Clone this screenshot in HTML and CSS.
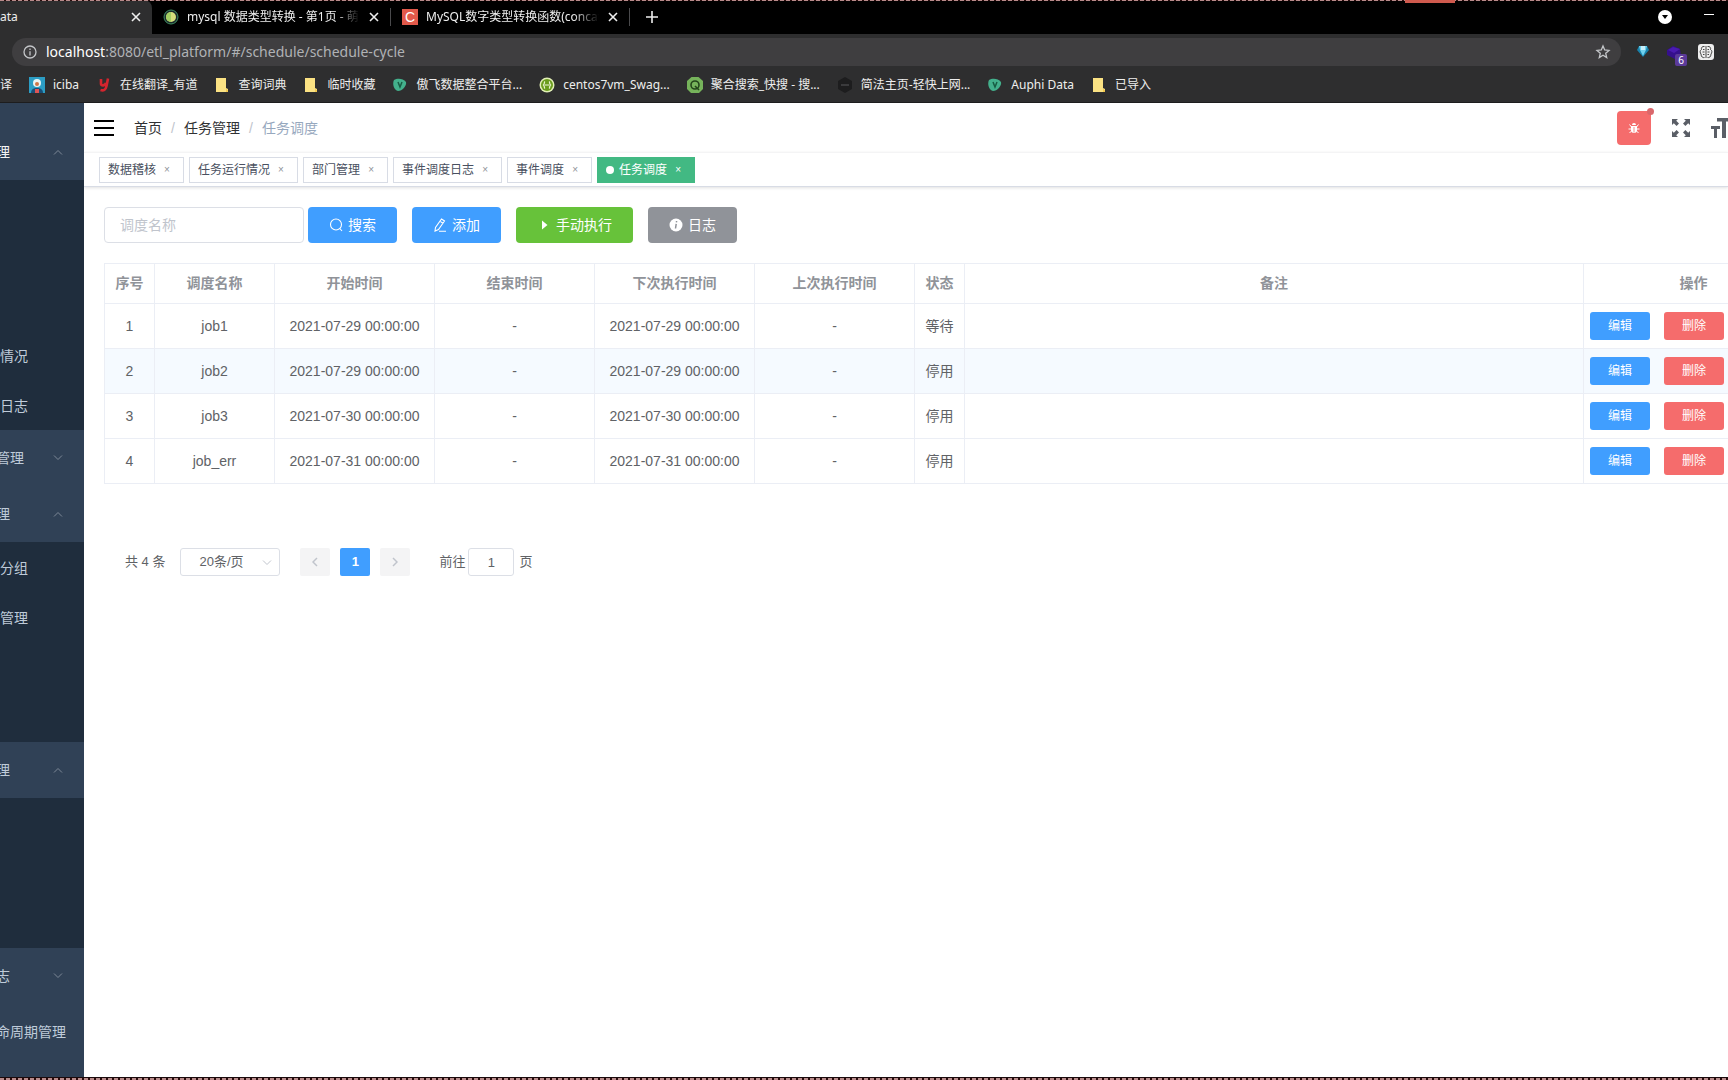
FILE: index.html
```html
<!DOCTYPE html>
<html lang="zh-CN">
<head>
<meta charset="utf-8">
<title>Auphi Data</title>
<link rel="stylesheet" href="styles.css">
</head>
<body>
<div class="screen">
<header class="browser">
  <div class="tabstrip">
    <div class="tab tab-active"><span class="tab-title">ata</span><button class="tab-close" aria-label="关闭"><svg width="10" height="10" viewBox="0 0 10 10"><path d="M1 1l8 8M9 1l-8 8"/></svg></button></div>
    <div class="tab"><svg width="16" height="16" viewBox="0 0 16 16"><circle cx="8" cy="8" r="7" fill="#1b2a2c" stroke="#3f8d63"/><circle cx="8" cy="8" r="5" fill="#d6df7c"/><path d="M8 3a5 5 0 0 0 0 10z" fill="#a3cf62"/></svg><span class="tab-title fade">mysql 数据类型转换 - 第1页 - 萌</span><button class="tab-close" aria-label="关闭"><svg width="10" height="10" viewBox="0 0 10 10"><path d="M1 1l8 8M9 1l-8 8"/></svg></button></div>
    <div class="tab"><span class="fav-c">C</span><span class="tab-title fade">MySQL数字类型转换函数(concat</span><button class="tab-close" aria-label="关闭"><svg width="10" height="10" viewBox="0 0 10 10"><path d="M1 1l8 8M9 1l-8 8"/></svg></button></div>
    <button class="new-tab" aria-label="新标签页"><svg width="12" height="12" viewBox="0 0 12 12"><path d="M6 0v12M0 6h12"/></svg></button>
    <div class="window-tools">
      <svg width="14" height="14" viewBox="0 0 14 14"><circle cx="7" cy="7" r="7" fill="#fff"/><path d="M4 5h6l-3 4z" fill="#000"/></svg>
      <svg width="10" height="14" viewBox="0 0 10 14"><path d="M0 4.500h10" stroke="#fff"/></svg>
    </div>
    <span class="record-tab"></span>
  </div>
  <div class="address-row">
    <div class="omnibox">
      <svg width="14" height="14" viewBox="0 0 14 14" fill="none" stroke="#c4c6c9" stroke-width="1.300"><circle cx="7" cy="7" r="6"/><path d="M7 6.200V10.500M7 3.500v1.400"/></svg>
      <span class="url"><b>localhost</b>:8080/etl_platform/#/schedule/schedule-cycle</span>
      <svg width="16" height="16" viewBox="0 0 16 16" fill="none" stroke="#c4c6c9" stroke-width="1.300"><path d="M8 2l1.700 4 4.300.4-3.300 2.800 1 4.300L8 11.200l-3.700 2.300 1-4.300L2 6.400 6.300 6z"/></svg>
    </div>
    <div class="extensions">
      <svg width="14" height="14" viewBox="0 0 14 14"><path d="M3 1h8l2 4-6 7-6-7z" fill="#1783ad"/><path d="M3 1h8l-1 4-3 6-3-6z" fill="#6fd0ee"/><path d="M5 1h4v4H5z" fill="#c5effa"/></svg>
      <span class="ext-purple"><svg width="16" height="16" viewBox="0 0 16 16"><path d="M1 6l6-4 7 3 1 7-6 3-8-4z" fill="#35108c"/><path d="M2 6l5-3 7 2-6 4z" fill="#4a1bb0"/></svg><span class="ext-badge">6</span></span>
      <svg width="16" height="16" viewBox="0 0 16 16"><rect width="16" height="16" rx="3" fill="#eee"/><path d="M8 2v12M6.500 2.500C4 2 3 4 3.500 5.500 1.500 6.500 2 9 3 10c0 3 2 4 3.500 3.500M9.500 2.500c2.500-.5 3.500 1.500 3 3 2 1 1.500 3.500.5 4.500 0 3-2 4-3.500 3.500M5 5.500h1.500M4.500 8h2M5 10.500h1.500M11 5.500H9.500M11.500 8h-2M11 10.500H9.500" fill="none" stroke="#333" stroke-width=".9"/></svg>
    </div>
  </div>
  <nav class="bookmarks">
    <a href="#" class="bm">译</a>
    <a href="#" class="bm"><svg width="16" height="16" viewBox="0 0 16 16"><path d="M0 0h16v16H0z" fill="#2c9dc4"/><path d="M2 16c0-4 3-5 6-5s6 1 6 5z" fill="#184f78"/><circle cx="8" cy="6" r="4" fill="#e9f5f5"/><circle cx="8" cy="7" r="2" fill="#cf7648"/><path d="M6 12h4v4H6z" fill="#d55"/></svg>iciba</a>
    <a href="#" class="bm"><svg width="16" height="16" viewBox="0 0 16 16" fill="none" stroke="#d3252e" stroke-width="2.600"><path d="M5 2v5c0 2 4 2 5-1M12 1.500L10.500 9c-.7 4-3 5-6 4"/></svg>在线翻译_有道</a>
    <a href="#" class="bm"><svg width="16" height="16" viewBox="0 0 16 16"><path d="M2 1h10v10l2 1v3H2z" fill="#fbe283"/><path d="M12 12l2 1v2h-2z" fill="#f3c94f"/></svg>查询词典</a>
    <a href="#" class="bm"><svg width="16" height="16" viewBox="0 0 16 16"><path d="M2 1h10v10l2 1v3H2z" fill="#fbe283"/><path d="M12 12l2 1v2h-2z" fill="#f3c94f"/></svg>临时收藏</a>
    <a href="#" class="bm"><svg width="16" height="16" viewBox="0 0 16 16"><path d="M2 3c3-2 9-2 12 2 1 4-4 9-8 9C2 13 0 7 2 3z" fill="#43b08c"/><path d="M6 5l2 5 2-5" fill="none" stroke="#175c43" stroke-width="1.500"/></svg>傲飞数据整合平台...</a>
    <a href="#" class="bm"><svg width="16" height="16" viewBox="0 0 16 16"><circle cx="8" cy="8" r="7.500" fill="#e1efb5"/><circle cx="8" cy="8" r="6" fill="#6a9c1d"/><path d="M6 4.500c-1.500 1 0 2.500-1.500 3.500 1.500 1 0 2.500 1.500 3.500M10 4.500c1.500 1 0 2.500 1.500 3.500-1.500 1 0 2.500-1.500 3.500M6 8h4" fill="none" stroke="#eef6d8" stroke-width="1.200"/></svg>centos7vm_Swag...</a>
    <a href="#" class="bm"><svg width="16" height="16" viewBox="0 0 16 16"><path d="M4.500 0h7L16 4v8l-4 4H4l-4-4V4z" fill="#76b35b"/><circle cx="8" cy="8" r="4" fill="none" stroke="#24451b" stroke-width="1.600"/><path d="M8 9l4 4" stroke="#24451b" stroke-width="1.600"/></svg>聚合搜索_快搜 - 搜...</a>
    <a href="#" class="bm"><svg width="16" height="16" viewBox="0 0 16 16"><path d="M8 0l7 4v8l-7 4-7-4V4z" fill="#1d1d1e"/><path d="M4 8h8" stroke="#3a3a3c" stroke-width="2"/></svg>简法主页-轻快上网...</a>
    <a href="#" class="bm"><svg width="16" height="16" viewBox="0 0 16 16"><path d="M2 3c3-2 9-2 12 2 1 4-4 9-8 9C2 13 0 7 2 3z" fill="#43b08c"/><path d="M6 5l2 5 2-5" fill="none" stroke="#175c43" stroke-width="1.500"/></svg>Auphi Data</a>
    <a href="#" class="bm"><svg width="16" height="16" viewBox="0 0 16 16"><path d="M2 1h10v10l2 1v3H2z" fill="#fbe283"/><path d="M12 12l2 1v2h-2z" fill="#f3c94f"/></svg>已导入</a>
  </nav>
</header>

<div class="app">
  <aside class="sidebar">
    <div class="menu-gap"></div>
    <a href="#" class="menu-title current"><span>理</span><svg class="arrow" width="10" height="6" viewBox="0 0 10 6"><path d="M1 5.500l4-4 4 4"/></svg></a>
    <ul class="submenu"><li></li><li></li><li></li><li><a href="#">情况</a></li><li><a href="#">日志</a></li></ul>
    <a href="#" class="menu-title"><span>管理</span><svg class="arrow" width="10" height="6" viewBox="0 0 10 6"><path d="M1 .5l4 4 4-4"/></svg></a>
    <a href="#" class="menu-title"><span>理</span><svg class="arrow" width="10" height="6" viewBox="0 0 10 6"><path d="M1 5.500l4-4 4 4"/></svg></a>
    <ul class="submenu"><li><a href="#">分组</a></li><li><a href="#">管理</a></li><li></li><li></li></ul>
    <a href="#" class="menu-title"><span>理</span><svg class="arrow" width="10" height="6" viewBox="0 0 10 6"><path d="M1 5.500l4-4 4 4"/></svg></a>
    <ul class="submenu"><li></li><li></li><li></li></ul>
    <a href="#" class="menu-title"><span>志</span><svg class="arrow" width="10" height="6" viewBox="0 0 10 6"><path d="M1 .5l4 4 4-4"/></svg></a>
    <a href="#" class="menu-title"><span>命周期管理</span></a>
  </aside>

  <main class="main">
    <div class="navbar">
      <button class="hamburger" aria-label="菜单"><svg width="20" height="16" viewBox="0 0 20 16"><path d="M0 1h20M0 8h20M0 15h20"/></svg></button>
      <nav class="crumbs"><a href="#">首页</a><span class="sep">/</span><a href="#">任务管理</a><span class="sep">/</span><span class="here">任务调度</span></nav>
      <div class="nav-tools">
        <button class="bug" aria-label="错误日志"><svg width="12" height="12" viewBox="0 0 12 12"><path d="M4 3a2 2 0 0 1 4 0z" fill="#fff"/><path d="M3 4h6v4a3 3 0 0 1-6 0z" fill="#fff"/><path d="M1.500 2.500L3.500 5M10.500 2.500L8.500 5M.5 7h11M1.500 11L4 8.500M10.500 11L8 8.500" stroke="#fff"/><path d="M6 5v5.500" stroke="#f56c6c" stroke-width=".8"/></svg><span class="bug-dot"></span></button>
        <button class="icon-btn" aria-label="全屏"><svg width="18" height="18" viewBox="0 0 18 18"><path d="M0 0h6L4.200 1.800 7 4.600 4.600 7 1.800 4.200 0 6zM18 0v6l-1.800-1.800L13.400 7 11 4.600l2.800-2.800L12 0zM0 18v-6l1.800 1.800L4.600 11 7 13.400l-2.800 2.800L6 18zM18 18h-6l1.800-1.800L11 13.400l2.400-2.400 2.800 2.800L18 12z" fill="#5a5e66"/></svg></button>
        <button class="icon-btn size" aria-label="布局大小"><svg width="17" height="20" viewBox="0 0 17 20"><path d="M6 0h14v3.500h-5V20h-4V3.500H6zM0 8h9v3H6v9H3v-9H0z" fill="#5a5e66"/></svg></button>
      </div>
    </div>
    <div class="tags">
      <a href="#" class="tag">数据稽核<i>×</i></a>
      <a href="#" class="tag">任务运行情况<i>×</i></a>
      <a href="#" class="tag">部门管理<i>×</i></a>
      <a href="#" class="tag">事件调度日志<i>×</i></a>
      <a href="#" class="tag">事件调度<i>×</i></a>
      <a href="#" class="tag active">任务调度<i>×</i></a>
    </div>

    <section class="content">
      <form class="filters">
        <input type="text" class="search" placeholder="调度名称" aria-label="调度名称">
        <div class="actions">
          <button type="button" class="btn primary"><svg width="14" height="14" viewBox="0 0 14 14" fill="none" stroke="#fff" stroke-width="1.100"><circle cx="7" cy="6.500" r="5.500"/><path d="M10.800 10.500l2.200 2.500"/></svg>搜索</button>
          <button type="button" class="btn primary"><svg width="14" height="14" viewBox="0 0 14 14" fill="none" stroke="#fff" stroke-width="1.100"><path d="M8.500 1l3 2-6 8.500-3.500 1.500.5-3.500zM7 3.200l3 2M6 13.300h7"/></svg>添加</button>
          <button type="button" class="btn success"><svg width="14" height="14" viewBox="0 0 14 14"><path d="M5 2.500l5.500 4.500L5 11.500z" fill="#fff"/></svg>手动执行</button>
          <button type="button" class="btn info"><svg width="14" height="14" viewBox="0 0 14 14"><circle cx="7" cy="7" r="6.500" fill="#fff"/><path d="M7.600 3l-.2 1.300M7.200 5.800L6.500 10.500" stroke="#909399" stroke-width="1.500"/></svg>日志</button>
        </div>
      </form>

      <table class="grid">
        <colgroup><col class="w50"><col class="w120"><col class="w160"><col class="w160"><col class="w160"><col class="w160"><col class="w50"><col><col class="w220"></colgroup>
        <thead><tr><th>序号</th><th>调度名称</th><th>开始时间</th><th>结束时间</th><th>下次执行时间</th><th>上次执行时间</th><th>状态</th><th>备注</th><th>操作</th></tr></thead>
        <tbody>
          <tr><td>1</td><td>job1</td><td>2021-07-29 00:00:00</td><td>-</td><td>2021-07-29 00:00:00</td><td>-</td><td>等待</td><td></td><td class="ops"><div><button class="mini primary">编辑</button><button class="mini danger">删除</button></div></td></tr>
          <tr class="hover"><td>2</td><td>job2</td><td>2021-07-29 00:00:00</td><td>-</td><td>2021-07-29 00:00:00</td><td>-</td><td>停用</td><td></td><td class="ops"><div><button class="mini primary">编辑</button><button class="mini danger">删除</button></div></td></tr>
          <tr><td>3</td><td>job3</td><td>2021-07-30 00:00:00</td><td>-</td><td>2021-07-30 00:00:00</td><td>-</td><td>停用</td><td></td><td class="ops"><div><button class="mini primary">编辑</button><button class="mini danger">删除</button></div></td></tr>
          <tr><td>4</td><td>job_err</td><td>2021-07-31 00:00:00</td><td>-</td><td>2021-07-31 00:00:00</td><td>-</td><td>停用</td><td></td><td class="ops"><div><button class="mini primary">编辑</button><button class="mini danger">删除</button></div></td></tr>
        </tbody>
      </table>

      <div class="pager">
        <span class="total">共 4 条</span>
        <span class="select-wrap"><select aria-label="每页条数"><option>20条/页</option></select><svg width="10" height="6" viewBox="0 0 10 6"><path d="M1 .5l4 4 4-4"/></svg></span>
        <span class="pages">
          <button class="page" disabled aria-label="上一页"><svg width="6" height="10" viewBox="0 0 6 10"><path d="M5 1L1 5l4 4"/></svg></button>
          <button class="page on">1</button>
          <button class="page" disabled aria-label="下一页"><svg width="6" height="10" viewBox="0 0 6 10"><path d="M1 1l4 4-4 4"/></svg></button>
        </span>
        <label class="jump">前往<input type="text" value="1">页</label>
      </div>
    </section>
  </main>
</div>
</div>
</body>
</html>
```
FILE: styles.css
```css
* { box-sizing: border-box; }
body { margin: 0; background: #fff; font: 14px/20px "Liberation Sans", "Noto Sans CJK SC", sans-serif; color: #606266; }
a { color: inherit; text-decoration: none; }
button, input, select { font: inherit; margin: 0; padding: 0; border: 0; background: none; color: inherit; }
svg { display: block; flex: none; }
ul { list-style: none; margin: 0; padding: 0; }

.screen { position: relative; display: flex; flex-direction: column; min-height: 100vh; overflow: hidden; }
.screen::before, .screen::after { content: ""; position: absolute; left: 0; right: 0; z-index: 2; height: 1px; background: repeating-linear-gradient(90deg, #b98b8b 0 4px, #2a0c0c 4px 6px); }
.screen::before { top: 0; }
.screen::after { bottom: 0; height: 2px; border-top: 1px solid #1a0a0c; }

/* Browser frame */
.browser { background: #2e2e2f; color: #eee; font: 12px/16px "Noto Sans", "Noto Sans CJK SC", sans-serif; border-bottom: 1px solid #1d1d1e; }
.tabstrip { position: relative; display: flex; align-items: center; height: 34px; background: #000; }
.tab { display: flex; align-items: center; gap: 8px; width: 239px; height: 18px; padding: 0 10px 0 11px; border-right: 1px solid #4a4a4c; flex: none; }
.tab-active { width: 152px; height: 34px; padding-left: 0; background: #2e2e2f; border: 0; border-radius: 0 8px 0 0; gap: 0; }
.tab-title { flex: 1; overflow: hidden; white-space: nowrap; line-height: 18px; }
.fade { mask-image: linear-gradient(90deg, #000 85%, transparent); }
.tab-close { width: 12px; height: 12px; display: grid; place-items: center; }
.tab-close svg, .new-tab svg { stroke: #eee; stroke-width: 1.6; }
.fav-c { width: 16px; height: 16px; background: #e2594a; color: #fff; text-align: center; font: 14px/16px "Liberation Sans", sans-serif; }
.new-tab { width: 44px; display: grid; place-items: center; }
.window-tools { display: flex; gap: 32px; margin-left: auto; padding-right: 14px; }
.record-tab { position: absolute; right: 273px; top: 0; width: 50px; height: 3px; background: #cf5a4e; z-index: 3; }

.address-row { display: flex; align-items: center; padding: 4px 14px 4px 12px; gap: 15px; }
.omnibox { flex: 1; display: flex; align-items: center; gap: 9px; height: 28px; padding: 0 10px 0 11px; border-radius: 14px; background: #3f3e40; }
.url { flex: 1; color: #b0b2b5; font-size: 14px; }
.url b { font-weight: 400; color: #fff; }
.extensions { display: flex; align-items: center; gap: 16px; }
.ext-purple { position: relative; display: block; }
.ext-badge { position: absolute; left: 9px; top: 10px; width: 12px; height: 12px; background: #5b3a99; color: #fff; font-size: 10px; line-height: 12px; text-align: center; border-radius: 2px; }
.bookmarks { display: flex; align-items: center; gap: 17px; height: 32px; padding-bottom: 2px; }
.bm { display: flex; align-items: center; gap: 8px; white-space: nowrap; }

/* Application */
.app { flex: 1; display: flex; }
.sidebar { width: 84px; flex: none; overflow: hidden; background: #304156; color: #bfcbd9; }
.menu-gap { height: 21px; }
.menu-title { display: flex; align-items: center; justify-content: space-between; height: 56px; padding-right: 21px; white-space: nowrap; }
.menu-title span { margin-left: -4px; line-height: 22px; }
.menu-title.current { color: #f4f4f5; }
.arrow { fill: none; stroke: #7d8896; }
.submenu { background: #1f2d3d; }
.submenu li { height: 50px; line-height: 52px; }

.main { flex: 1; min-width: 0; overflow: hidden; }
.navbar { display: flex; align-items: center; height: 49px; padding-left: 10px; }
.hamburger svg { stroke: #000; stroke-width: 2; }
.crumbs { display: flex; margin-left: 20px; color: #303133; }
.sep { width: 22px; text-align: center; color: #c0c4cc; }
.here { color: #97a8be; }
.nav-tools { display: flex; align-items: center; gap: 21px; margin-left: auto; }
.bug { position: relative; width: 34px; height: 34px; border-radius: 4px; background: #f56c6c; display: grid; place-items: center; }
.bug-dot { position: absolute; right: -3px; top: -3px; width: 7px; height: 7px; border-radius: 50%; background: #d9686c; }
.size { overflow: hidden; }
.tags { display: flex; gap: 5px; height: 35px; padding: 4px 15px; border-top: 1px solid #f4f4f5; border-bottom: 1px solid #d8dce5; box-shadow: 0 1px 3px rgba(0, 0, 0, .12); }
.tag { display: flex; align-items: center; height: 26px; padding: 0 8px; border: 1px solid #d8dce5; color: #495060; font-size: 12px; white-space: nowrap; }
.tag i { width: 16px; margin-left: 3px; text-align: center; font-size: 10px; font-style: normal; color: #909399; }
.tag.active { background: #42b983; border-color: #42b983; color: #fff; }
.tag.active i { color: #fff; }
.tag.active::before { content: ""; width: 8px; height: 8px; margin-right: 5px; border-radius: 50%; background: #fff; }

.content { padding: 20px 0 0 20px; }
.filters { display: flex; gap: 4px; }
.search { width: 200px; height: 36px; padding: 0 15px; border: 1px solid #dcdfe6; border-radius: 4px; }
.search::placeholder { color: #c0c4cc; opacity: 1; }
.actions { display: flex; gap: 15px; }
.btn { display: flex; align-items: center; gap: 5px; height: 36px; padding: 0 21px; border-radius: 4px; color: #fff; }
.primary { background: #409eff; }
.success { background: #67c23a; }
.info { background: #909399; }
.danger { background: #f56c6c; }

.grid { width: calc(100% + 76px); margin-top: 20px; table-layout: fixed; border-collapse: collapse; }
.grid th, .grid td { padding: 0; border: 1px solid #ebeef5; text-align: center; height: 45px; }
.grid th { height: 40px; padding-bottom: 2px; color: #909399; font-weight: 700; }
.hover { background: #f5faff; }
.w50 { width: 50px; }
.w120 { width: 120px; }
.w160 { width: 160px; }
.w220 { width: 220px; }
.ops div { display: flex; gap: 14px; padding-left: 6px; }
.mini { width: 60px; height: 28px; border-radius: 3px; color: #fff; font-size: 12px; }

.pager { display: flex; align-items: center; margin-top: 64px; padding-left: 21px; font-size: 13px; }
.select-wrap { position: relative; margin-left: 15px; }
.select-wrap select { appearance: none; width: 100px; height: 28px; padding-left: 18px; border: 1px solid #dcdfe6; border-radius: 3px; }
.select-wrap svg { position: absolute; right: 8px; top: 12px; fill: none; stroke: #c0c4cc; }
.pages { display: flex; gap: 10px; margin: 0 29px 0 20px; }
.page { width: 30px; height: 28px; border-radius: 2px; background: #f4f4f5; display: grid; place-items: center; }
.page svg { fill: none; stroke: #c0c4cc; stroke-width: 1.5; }
.page.on { background: #409eff; color: #fff; font-weight: 700; }
.jump { display: flex; align-items: center; }
.jump input { width: 46px; height: 28px; margin: 0 5px 0 3px; border: 1px solid #dcdfe6; border-radius: 3px; text-align: center; }
```
